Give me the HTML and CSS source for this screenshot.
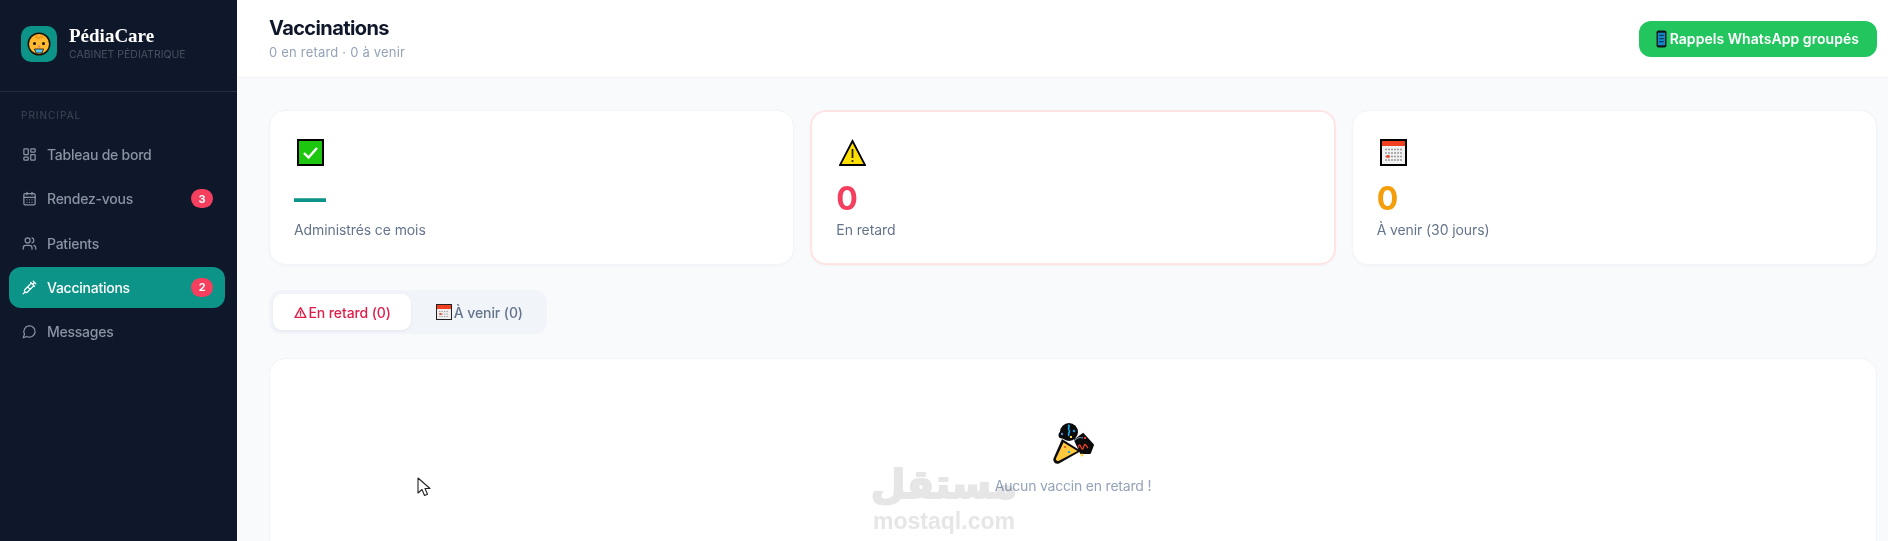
FILE: index.html
```html
<!DOCTYPE html>
<html lang="fr">
<head>
<meta charset="utf-8">
<title>PédiaCare – Vaccinations</title>
<link rel="stylesheet" href="styles.css">
</head>
<body>
<div class="app">
  <aside class="sidebar">
    <div class="brand">
      <div class="logo">
        <svg viewBox="0 0 24 24" width="24" height="24">
          <circle cx="12" cy="12" r="11.500" fill="#1a1208"/>
          <circle cx="12" cy="12" r="10" fill="#fdb92f"/>
          <path d="M8.500 2.800c2 2.500 5 2.500 7 0l1 3c-3 1.500-6 1.500-9 0Z" fill="#f59a1e"/>
          <circle cx="7.500" cy="11.500" r="1.500" fill="#111"/>
          <circle cx="16.500" cy="11.500" r="1.500" fill="#111"/>
          <circle cx="12" cy="14.500" r="1.200" fill="#e8876b"/>
          <path d="M7.500 17h9l-1.500 4h-6z" fill="#5ac8f0" stroke="#1a1208" stroke-width=".8"/>
        </svg>
      </div>
      <div>
        <div class="brand-name">PédiaCare</div>
        <div class="brand-sub">CABINET PÉDIATRIQUE</div>
      </div>
    </div>
    <div class="nav-label">PRINCIPAL</div>
    <nav class="nav">
      <a class="nav-item">
        <svg class="nav-icon" viewBox="0 0 24 24"><rect x="3" y="3" width="7" height="9" rx="1"/><rect x="14" y="3" width="7" height="5" rx="1"/><rect x="14" y="12" width="7" height="9" rx="1"/><rect x="3" y="16" width="7" height="5" rx="1"/></svg>
        <span>Tableau de bord</span>
      </a>
      <a class="nav-item">
        <svg class="nav-icon" viewBox="0 0 24 24"><path d="M8 2v4M16 2v4"/><rect x="3" y="4" width="18" height="18" rx="2"/><path d="M3 10h18M8 14h.01M12 14h.01M16 14h.01M8 18h.01M12 18h.01M16 18h.01"/></svg>
        <span>Rendez-vous</span>
        <b class="badge">3</b>
      </a>
      <a class="nav-item">
        <svg class="nav-icon" viewBox="0 0 24 24"><path d="M16 21v-2a4 4 0 0 0-4-4H6a4 4 0 0 0-4 4v2"/><circle cx="9" cy="7" r="4"/><path d="M22 21v-2a4 4 0 0 0-3-3.870M16 3.130a4 4 0 0 1 0 7.750"/></svg>
        <span>Patients</span>
      </a>
      <a class="nav-item active">
        <svg class="nav-icon" viewBox="0 0 24 24"><path d="m18 2 4 4M17 7l3-3M19 9 8.700 19.300c-1 1-2.500 1-3.400 0l-.6-.6c-1-1-1-2.500 0-3.400L15 5M9 11l4 4M5 19l-3 3M14 4l6 6"/></svg>
        <span>Vaccinations</span>
        <b class="badge">2</b>
      </a>
      <a class="nav-item">
        <svg class="nav-icon" viewBox="0 0 24 24"><path d="M7.900 20A9 9 0 1 0 4 16.100L2 22Z"/></svg>
        <span>Messages</span>
      </a>
    </nav>
  </aside>

  <main class="main">
    <header class="topbar">
      <div>
        <h1 class="title">Vaccinations</h1>
        <p class="subtitle">0 en retard · 0 à venir</p>
      </div>
      <button class="wa-btn">
        <svg viewBox="0 0 12 20" width="11" height="18"><rect x=".5" y=".5" width="11" height="19" rx="2" fill="#101418"/><rect x="2" y="3" width="8" height="14" fill="#1687c8"/><path d="M3.500 6h5M3.500 9.500h5M3.500 13h5" stroke="#0b3d5e" stroke-width="1.300"/></svg>
        <span>Rappels WhatsApp groupés</span>
      </button>
    </header>

    <div class="content">
      <section class="stats">
        <div class="card">
          <svg class="stat-emoji" viewBox="0 0 27 27"><rect x="1" y="1" width="25" height="25" fill="#1ec70f" stroke="#000" stroke-width="2"/><path d="M7 14l4.500 4.500L20 9" fill="none" stroke="#fff" stroke-width="2.400"/></svg>
          <div class="stat-value teal">—</div>
          <div class="stat-label">Administrés ce mois</div>
        </div>
        <div class="card card-alert">
          <svg class="stat-emoji" viewBox="0 0 27 27"><path d="M13.500 2 26 26H1Z" fill="#ffdf00" stroke="#000" stroke-width="1.800"/><path d="M13.500 10v9" stroke="#222" stroke-width="1.800"/><circle cx="13.500" cy="22" r="1.100" fill="#222"/></svg>
          <div class="stat-value red">0</div>
          <div class="stat-label">En retard</div>
        </div>
        <div class="card">
          <svg class="stat-emoji" viewBox="0 0 27 27"><rect x="1" y="1" width="25" height="25" fill="#f1f1f1" stroke="#000" stroke-width="2"/><rect x="2" y="2" width="23" height="5" fill="#f1401f"/><path d="M5 10.500h17M5 14h17M5 17.500h17M5 21h17" stroke="#9a9a9a" stroke-width="1.500" stroke-dasharray="2 1"/><circle cx="8" cy="17.500" r="1.800" fill="#e8502f"/></svg>
          <div class="stat-value amber">0</div>
          <div class="stat-label">À venir (30 jours)</div>
        </div>
      </section>

      <div class="tabs">
        <button class="tab tab-active">
          <svg viewBox="0 0 24 24" width="13" height="13" fill="none" stroke="#e11d48" stroke-width="2.600" stroke-linejoin="round" stroke-linecap="round"><path d="M12 3 22 21H2Z"/><path d="M12 10v5M12 18h.01"/></svg>
          <span>En retard (0)</span>
        </button>
        <button class="tab">
          <svg viewBox="0 0 16 16" width="16" height="16"><rect x=".5" y=".5" width="15" height="15" fill="#eee" stroke="#222"/><rect x="1" y="1" width="14" height="4" fill="#f1401f"/><path d="M3 7.500h10M3 10h10M3 12.500h10" stroke="#aaa" stroke-dasharray="1.500 1"/><rect x="3.500" y="9" width="2" height="2" fill="#e8502f"/></svg>
          <span>À venir (0)</span>
        </button>
      </div>

      <section class="panel">
        <svg class="party" viewBox="0 0 41 41">
          <circle cx="16" cy="9" r="9" fill="#0b0b0b"/>
          <circle cx="9" cy="12" r="3.500" fill="#0b0b0b"/>
          <path d="M20 2c3 0 4 3 3 6l-4 8H12Z" fill="#0b0b0b"/>
          <path d="M22 17 30 11 40 22 37 30 28 30Z" fill="#0b0b0b" stroke="#0b0b0b" stroke-width="2" stroke-linejoin="round"/>
          <path d="M9 16 28 28 6 40.500C2.500 42-.5 38.500.5 35.500Z" fill="#0b0b0b"/>
          <path d="M10.500 19.500 24.500 28 5.500 38c-1.500.5-3-1-2.500-2.500Z" fill="#ffc83d"/>
          <path d="M15 2c3 1-1 3 1 5s-2 3 0 6" fill="none" stroke="#18a9e6" stroke-width="1.700"/>
          <path d="M25 25c1-4 2-4 3-1s2 3 3-1 2 0 4 2" fill="none" stroke="#e8432a" stroke-width="1.300"/>
          <circle cx="21" cy="8" r="1.200" fill="#18a9e6"/><circle cx="9" cy="11" r="1.200" fill="#4f8fd6"/>
          <rect x="17" y="13" width="2" height="2" fill="#ffd83d"/><rect x="31" y="14" width="2" height="2" fill="#e8432a"/>
          <rect x="11" y="23" width="2" height="2" fill="#f0642a"/><rect x="15" y="28" width="2" height="2" fill="#18a9e6"/>
          <circle cx="29" cy="32" r="1.500" fill="#ffd83d"/>
          <path d="M21 18c3-3 5-4 9-3" fill="none" stroke="#8aa3c7" stroke-width="1"/>
        </svg>
        <p class="empty-text">Aucun vaccin en retard !</p>
      </section>
    </div>
  </main>

  <div class="watermark" aria-hidden="true">
    <div class="wm-ar">مستقل</div>
    <div class="wm-en">mostaql.com</div>
  </div>

  <svg class="cursor" viewBox="0 0 14 20" width="14" height="20"><path d="M1 1v15l4-3.500 2.500 6 3-1.300L8 11.500h5Z" fill="#fff" stroke="#222" stroke-width="1.100" stroke-linejoin="round"/></svg>
</div>
</body>
</html>
```

FILE: styles.css
```css
* { box-sizing: border-box; }
html, body { margin: 0; height: 100%; overflow: hidden; }
body { font-family: Inter, "Liberation Sans", sans-serif; background: #f8fafc; color: #0f172a; }
.app { position: relative; display: flex; height: 541px; overflow: hidden; }

.sidebar { flex: 0 0 237px; background: #0f172a; color: #fff; }
.brand { display: flex; align-items: center; gap: 12px; height: 92px; padding: 0 21px 4px; border-bottom: 1px solid #242e40; }
.logo { width: 36px; height: 36px; border-radius: 10px; background: #0d9488; display: flex; align-items: center; justify-content: center; }
.brand-name { font-family: "Liberation Serif", serif; font-weight: 700; font-size: 19px; line-height: 22px; }
.brand-sub { font-size: 10.5px; line-height: 14px; color: #475161; margin-top: 1px; }
.nav-label { font-size: 10px; line-height: 14px; letter-spacing: 1px; color: #3e4858; padding: 16px 21px 0; }
.nav { display: flex; flex-direction: column; gap: 3.3px; padding: 12px 12px 0 9px; }
.nav-item { display: flex; align-items: center; gap: 10px; height: 41px; padding: 0 13px; border-radius: 12px; font-size: 14px; font-weight: 500; letter-spacing: -0.25px; color: #8a93a3; }
.nav-item span { flex: 1; }
.nav-icon { width: 15px; height: 15px; flex: none; fill: none; stroke: currentColor; stroke-width: 2; stroke-linecap: round; stroke-linejoin: round; }
.nav-item.active { background: #0d9488; color: #fff; }
.badge { width: 22px; height: 19px; border-radius: 10px; background: #f43f5e; color: #fff; font-size: 11px; font-weight: 700; display: flex; align-items: center; justify-content: center; margin-right: -1px; }

.main { flex: 1; min-width: 0; display: flex; flex-direction: column; }
.topbar { height: 78px; flex: none; background: #fff; border-bottom: 1px solid #f1f5f9; padding: 0 11px 0 32px; display: flex; align-items: center; justify-content: space-between; }
.title { margin: 0; font-size: 20px; line-height: 26px; font-weight: 700; letter-spacing: -0.6px; color: #0f172a; transform: translateY(-1px); }
.subtitle { margin: 1px 0 0; font-size: 13px; line-height: 18px; color: #94a3b8; letter-spacing: 0.2px; }
.wa-btn { display: flex; align-items: center; gap: 3px; height: 36px; padding: 0 18px 0 17px; border: 0; border-radius: 12px; background: #22c55e; color: #fff; font: 600 14px Inter, sans-serif; letter-spacing: 0.05px; }

.content { flex: 1; padding: 32px 11px 0 32px; }
.stats { display: grid; grid-template-columns: repeat(3, 1fr); gap: 16px; }
.card { height: 155px; background: #fff; border: 1px solid #f1f5f9; border-radius: 16px; padding: 28px 24px 0; box-shadow: 0 1px 3px rgba(15, 23, 42, .03); }
.card-alert { border: 2px solid #ffe4e6; padding: 27px 24px 0; }
.stat-emoji { display: block; width: 27px; height: 27px; margin-left: 3px; }
.stat-value { font-size: 32px; line-height: 38px; font-weight: 700; margin-top: 14px; }
.teal { color: #0d9488; }
.red { color: #f43f5e; }
.amber { color: #f59e0b; }
.stat-label { font-size: 14px; line-height: 20px; color: #64748b; margin-top: 2px; letter-spacing: -0.1px; }

.tabs { display: inline-flex; gap: 4px; margin-top: 25px; padding: 4px; border-radius: 12px; background: #f1f5f9; }
.tab { display: flex; align-items: center; justify-content: center; gap: 2px; height: 36px; border: 0; border-radius: 9px; background: transparent; color: #64748b; font: 500 14px Inter, sans-serif; letter-spacing: -0.1px; padding: 0 20.5px; }
.tab-active { background: #fff; color: #e11d48; box-shadow: 0 1px 3px rgba(15, 23, 42, .06); }

.panel { height: 240px; margin-top: 24px; background: #fff; border: 1px solid #f1f5f9; border-radius: 16px; display: flex; flex-direction: column; align-items: center; padding-top: 64px; }
.party { width: 41px; height: 41px; display: block; }
.empty-text { margin: 12px 0 0; font-size: 14px; line-height: 20px; color: #94a3b8; letter-spacing: -0.2px; }

.watermark { position: absolute; left: 870px; top: 458px; width: 148px; text-align: center; color: #e6e6e6; pointer-events: none; mix-blend-mode: multiply; }
.wm-ar { font-family: "DejaVu Sans", sans-serif; font-weight: 700; font-size: 40px; line-height: 52px; -webkit-text-stroke: 2px #e6e6e6; }
.wm-en { font-family: "Liberation Sans", sans-serif; font-weight: 700; font-size: 23px; line-height: 22px; }
.cursor { position: absolute; left: 417px; top: 477px; }
```
